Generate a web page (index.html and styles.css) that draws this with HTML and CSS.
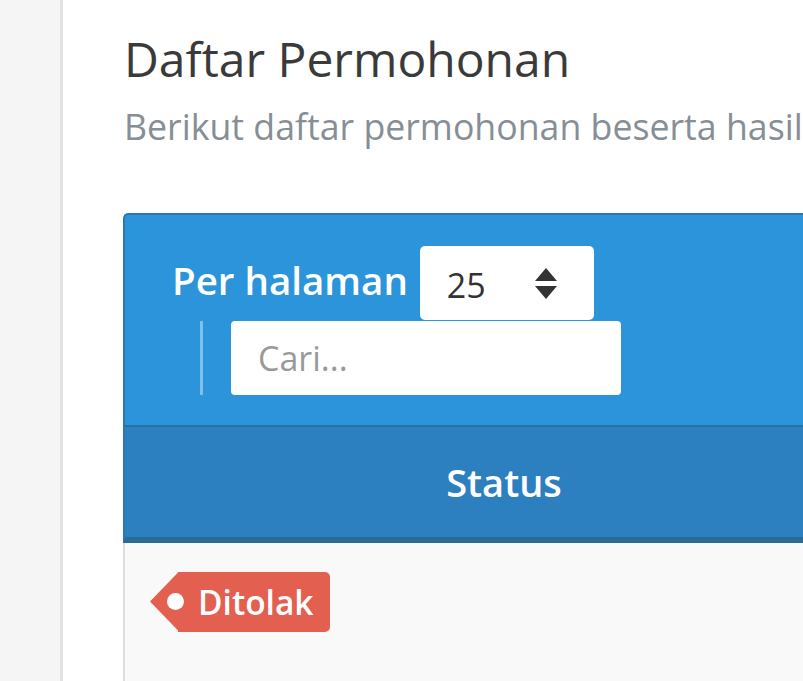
FILE: index.html
```html
<!DOCTYPE html>
<html lang="id">
<head>
<meta charset="utf-8">
<title>Daftar Permohonan</title>
<link rel="stylesheet" href="styles.css">
</head>
<body>
<div class="layout">
  <aside class="sidebar"></aside>
  <main class="main">
    <h1 class="title">Daftar Permohonan</h1>
    <p class="subtitle">Berikut daftar permohonan beserta hasil verifikasinya.</p>
    <section class="card">
      <div class="toolbar">
        <div class="per-page">
          <span class="per-page-label">Per halaman</span>
          <div class="select">
            <span class="select-value">25</span>
            <svg class="select-arrows" width="22" height="32" viewBox="0 0 22 32">
              <path d="M11 0 L22 13 L0 13 Z" fill="#333"/>
              <path d="M0 18 L22 18 L11 31 Z" fill="#333"/>
            </svg>
          </div>
        </div>
        <div class="search-group">
          <div class="search">Cari...</div>
        </div>
      </div>
      <div class="thead">
        <div class="th">Status</div>
      </div>
      <div class="tbody">
        <div class="td">
          <span class="badge"><span class="badge-point"></span><span class="badge-body"><span class="badge-dot"></span>Ditolak</span></span>
        </div>
      </div>
    </section>
  </main>
</div>
</body>
</html>
```

FILE: styles.css
```css
html, body {
  margin: 0;
  padding: 0;
  height: 100%;
  overflow: hidden;
  background: #ffffff;
  font-family: "Open Sans", "Noto Sans", sans-serif;
}

.layout {
  display: flex;
  min-height: 100vh;
  overflow: hidden;
}

.sidebar {
  flex: 0 0 60px;
  background: #f5f5f5;
  border-right: 3px solid #e2e2e2;
}

.main {
  flex: 1 1 auto;
  min-width: 0;
  padding: 30px 0 0 61px;
  overflow: hidden;
}

.title {
  margin: 0;
  font-size: 48px;
  font-weight: 400;
  line-height: 57.6px;
  color: #3a3a3a;
  white-space: nowrap;
}

.subtitle {
  margin: 15px 0 0 0;
  font-size: 35.7px;
  font-weight: 400;
  line-height: 46px;
  color: #868e96;
  white-space: nowrap;
}

.card {
  margin: 64px 0 0 -1px;
  width: 1000px;
  border-top-left-radius: 5px;
  overflow: hidden;
}

.toolbar {
  background: #2b94da;
  border-top: 2px solid #2978b2;
  border-left: 2px solid #2978b2;
  border-top-left-radius: 5px;
  padding: 31px 0 30px 47px;
  display: flex;
  flex-direction: column;
  align-items: flex-start;
}

.per-page {
  display: flex;
  align-items: center;
  gap: 12px;
}

.per-page-label {
  color: #ffffff;
  font-size: 38.5px;
  font-weight: 600;
  line-height: 50px;
  margin-top: -6px;
}

.select {
  width: 174px;
  height: 74px;
  box-sizing: border-box;
  background: #ffffff;
  border-radius: 5px;
  padding: 0 37px 0 27px;
  display: flex;
  align-items: center;
  justify-content: space-between;
}

.select-value {
  font-size: 34px;
  color: #333333;
  line-height: 1;
  margin-top: 4px;
}

.select-arrows {
  display: block;
  margin-top: 2px;
}

.search-group {
  margin-left: 28px;
  margin-top: 1px;
  border-left: 3px solid rgba(255, 255, 255, 0.4);
  padding-left: 28px;
}

.search {
  width: 390px;
  height: 74px;
  box-sizing: border-box;
  background: #ffffff;
  border-radius: 4px;
  padding-left: 27px;
  display: flex;
  align-items: center;
  font-size: 34px;
  color: #999999;
}

.thead {
  background: #2d80bf;
  border-top: 2px solid #2a6f9f;
  border-left: 2px solid #2978b2;
  border-bottom: 6px solid #2b6a96;
  display: flex;
}

.th {
  width: 758px;
  height: 110px;
  display: flex;
  align-items: center;
  justify-content: center;
  color: #ffffff;
  font-size: 38px;
  font-weight: 600;
}

.tbody {
  background: #f9f9f9;
  border-left: 2px solid #dddddd;
}

.td {
  padding: 29px 0 60px 25px;
}

.badge {
  display: inline-flex;
  height: 60px;
}

.badge-point {
  flex: none;
  width: 29px;
  height: 60px;
  background: #e35f4f;
  clip-path: polygon(100% 0, 100% 100%, 0 50%);
}

.badge-body {
  display: flex;
  align-items: center;
  background: #e35f4f;
  border-radius: 0 5px 5px 0;
  padding: 0 16px 0 0;
  color: #ffffff;
  font-size: 33.5px;
  font-weight: 600;
  margin-left: -1px;
}

.badge-dot {
  flex: none;
  width: 17px;
  height: 17px;
  border-radius: 50%;
  background: #ffffff;
  margin: 0 14px 0 -11px;
  position: relative;
}
```
